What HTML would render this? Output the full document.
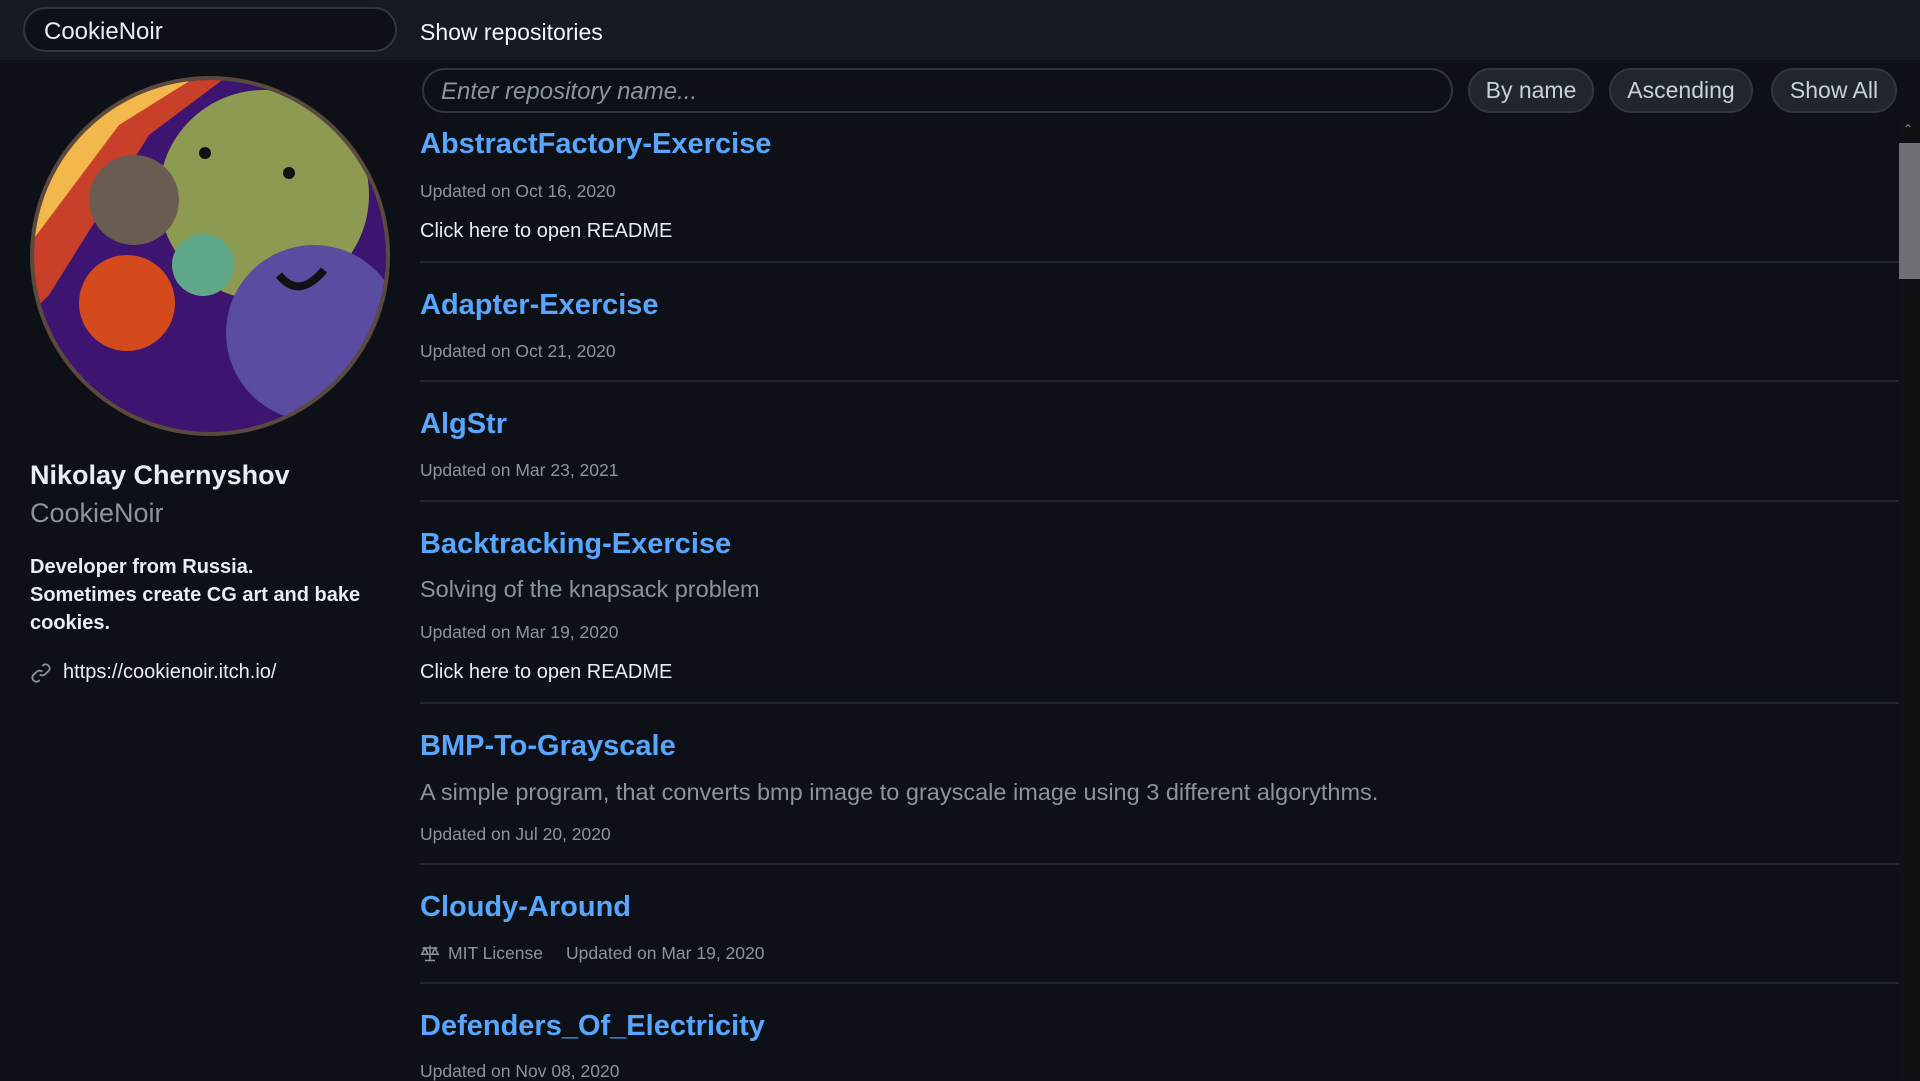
<!DOCTYPE html>
<html><head><meta charset="utf-8"><style>
*{margin:0;padding:0;box-sizing:border-box}
body{width:1920px;height:1080px;background:#0d1117;font-family:"Liberation Sans",sans-serif;position:relative;overflow:hidden;color:#e6edf3}
.a{position:absolute;white-space:nowrap}
.top{left:0;top:0;width:1920px;height:60px;background:#161b22}
.pill{border:2px solid #30363d;border-radius:24px}
.btn{background:#21262d;border:2px solid #30363d;border-radius:24px;color:#c9d1d9;font-size:23px;text-align:center;line-height:41px;height:45px;top:68px}
.t{color:#58a6ff;font-weight:bold;font-size:29px;line-height:34px;left:420px;letter-spacing:0px}
.u{color:#8b949e;font-size:17.5px;line-height:20px;left:420px}
.r{color:#e6edf3;font-size:20px;line-height:24px;left:420px}
.d{color:#8b949e;font-size:23.5px;line-height:28px;left:420px}
.sep{left:420px;width:1479px;height:2px;background:#21262d}
</style></head><body>
<div class="a top"></div>
<div class="a pill" style="left:23px;top:7px;width:374px;height:45px;background:#0d1117"></div>
<div class="a" style="left:44px;top:18px;font-size:24px;line-height:28px;color:#e6edf3">CookieNoir</div>
<div class="a" style="left:420px;top:18px;font-size:23px;line-height:28px;color:#f0f6fc">Show repositories</div>

<svg class="a" style="left:29px;top:75px" width="362" height="362" viewBox="0 0 362 362">
<defs><clipPath id="c"><circle cx="181" cy="181" r="176"/></clipPath></defs>
<circle cx="181" cy="181" r="180" fill="#5a4a3e"/>
<g clip-path="url(#c)">
<rect width="362" height="362" fill="#3d1470"/>
<path d="M0 0 L200 0 L120 60 L20 220 L0 240Z" fill="#c9402a"/>
<path d="M0 0 L170 0 L90 50 L0 170Z" fill="#f2b84c"/>
<circle cx="235" cy="120" r="105" fill="#8c9a52"/>
<circle cx="105" cy="125" r="45" fill="#6a5c50"/>
<circle cx="98" cy="228" r="48" fill="#d44a1c"/>
<circle cx="174" cy="190" r="31" fill="#5fa88a"/>
<circle cx="285" cy="258" r="88" fill="#5a4ca0"/>
<circle cx="176" cy="78" r="6" fill="#111"/><circle cx="260" cy="98" r="6" fill="#111"/>
<path d="M250 200 q20 25 45 -5" stroke="#111" stroke-width="8" fill="none"/>
</g>
</svg>

<div class="a" style="left:30px;top:459px;font-size:27px;line-height:32px;font-weight:bold;color:#e6edf3">Nikolay Chernyshov</div>
<div class="a" style="left:30px;top:497px;font-size:27px;line-height:32px;color:#8b949e">CookieNoir</div>
<div class="a" style="left:30px;top:553px;font-size:20px;line-height:28px;font-weight:bold;color:#e6edf3;white-space:normal;width:350px">Developer from Russia.<br>Sometimes create CG art and bake cookies.</div>
<svg class="a" style="left:30px;top:662px" width="22" height="22" viewBox="0 0 16 16" fill="none" stroke="#8b949e" stroke-width="1.3"><path d="M7 9a3 3 0 0 0 4 0l3-3a3 3 0 0 0-4-4l-1 1"/><path d="M9 7a3 3 0 0 0-4 0l-3 3a3 3 0 0 0 4 4l1-1"/></svg>
<div class="a" style="left:63px;top:660px;font-size:20px;line-height:24px;color:#e6edf3">https://cookienoir.itch.io/</div>

<div class="a pill" style="left:422px;top:68px;width:1031px;height:45px"></div>
<div class="a" style="left:441px;top:78px;font-size:24px;line-height:28px;font-style:italic;color:#8b949e">Enter repository name...</div>
<div class="a btn" style="left:1468px;width:126px">By name</div>
<div class="a btn" style="left:1609px;width:144px">Ascending</div>
<div class="a btn" style="left:1771px;width:126px">Show All</div>

<div class="a" style="left:1899px;top:120px;width:21px;height:960px;background:#0f1115"></div>
<div class="a" style="left:1899px;top:143px;width:21px;height:136px;background:#6e7076"></div>
<div class="a" style="left:1903px;top:122px;font-size:12px;color:#888">&#8963;</div>

<div class="a t" style="top:127px">AbstractFactory-Exercise</div>
<div class="a u" style="top:181px">Updated on Oct 16, 2020</div>
<div class="a r" style="top:219px">Click here to open README</div>
<div class="a sep" style="top:261px"></div>

<div class="a t" style="top:288px">Adapter-Exercise</div>
<div class="a u" style="top:341px">Updated on Oct 21, 2020</div>
<div class="a sep" style="top:380px"></div>

<div class="a t" style="top:407px">AlgStr</div>
<div class="a u" style="top:460px">Updated on Mar 23, 2021</div>
<div class="a sep" style="top:500px"></div>

<div class="a t" style="top:527px">Backtracking-Exercise</div>
<div class="a d" style="top:575px">Solving of the knapsack problem</div>
<div class="a u" style="top:622px">Updated on Mar 19, 2020</div>
<div class="a r" style="top:660px">Click here to open README</div>
<div class="a sep" style="top:702px"></div>

<div class="a t" style="top:729px">BMP-To-Grayscale</div>
<div class="a d" style="top:778px">A simple program, that converts bmp image to grayscale image using 3 different algorythms.</div>
<div class="a u" style="top:824px">Updated on Jul 20, 2020</div>
<div class="a sep" style="top:863px"></div>

<div class="a t" style="top:890px">Cloudy-Around</div>
<svg class="a" style="left:420px;top:943px" width="20" height="20" viewBox="0 0 16 16" fill="none" stroke="#8b949e" stroke-width="1.2"><path d="M8 2v12M4 14h8M2 4h12M4 4l-2.5 5h5zM12 4l-2.5 5h5z"/></svg>
<div class="a u" style="left:448px;top:943px">MIT License</div>
<div class="a u" style="left:566px;top:943px">Updated on Mar 19, 2020</div>
<div class="a sep" style="top:982px"></div>

<div class="a t" style="top:1009px">Defenders_Of_Electricity</div>
<div class="a u" style="top:1061px">Updated on Nov 08, 2020</div>
</body></html>
